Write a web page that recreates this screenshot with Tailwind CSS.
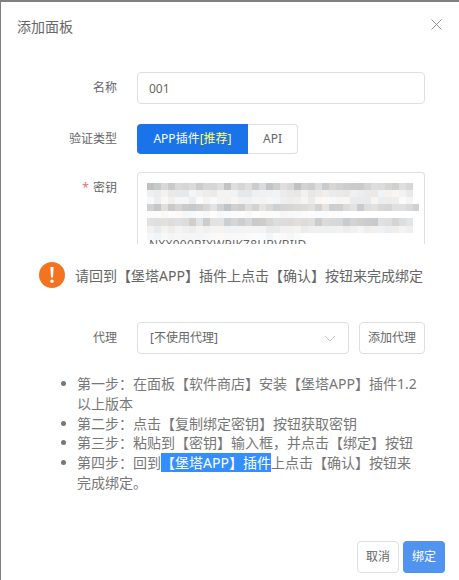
<!DOCTYPE html>
<html lang="en">
<head>
  <meta charset="UTF-8" />
  <title>添加面板</title>
  <script src="https://cdn.jsdelivr.net/npm/@tailwindcss/browser@4"></script>
</head>
<body class="bg-[#7f7f7f] h-[580px] overflow-hidden font-['Noto_Sans','Noto_Sans_CJK_SC',sans-serif]">
  <div class="ml-px mt-[2px] h-[578px] bg-white flex flex-col text-[12px] text-[#666]">
    <!-- Header -->
    <div class="h-[52px] pl-4 pr-4 flex justify-between items-start">
      <h1 class="text-[14px] leading-5 mt-[15px] text-[#666]">添加面板</h1>
      <svg class="w-[11px] h-[11px] mt-[17px] mr-[1px]" viewBox="0 0 11 11" fill="none" stroke="#909399" stroke-width="1"><path d="M0.5 0.5l10 10M10.5 0.5l-10 10" /></svg>
    </div>

    <!-- Form -->
    <div class="flex flex-col mt-[18px]">
      <div class="flex items-center h-8">
        <label class="w-[116px] text-right">名称</label>
        <input class="ml-[20px] w-[288px] h-8 border border-[#dcdfe6] rounded px-[11px] text-[12px] text-[#666]" value="001" />
      </div>

      <div class="flex items-center h-[30px] mt-[20px]">
        <label class="w-[116px] text-right">验证类型</label>
        <div class="ml-[20px] flex h-[30px]">
          <div class="w-[111px] bg-[#1a73e8] text-white rounded-l flex items-center justify-center">APP插件<span class="text-[#ffff66]">[推荐]</span></div>
          <div class="w-[50px] border border-l-0 border-[#dcdfe6] rounded-r flex items-center justify-center">API</div>
        </div>
      </div>

      <div class="flex items-start mt-[18px]">
        <label class="w-[116px] text-right leading-5 mt-[6px]"><span class="text-[#f56c6c] mr-1">*</span>密钥</label>
        <div class="relative ml-[20px] w-[288px] h-[72px] border border-b-0 border-[#dcdfe6] rounded-t overflow-hidden">
          <div class="absolute left-[11px] top-[64px] text-[12px] tracking-[0.2px] leading-[16px] text-[#666] whitespace-nowrap">NXX900RIXWPJKZ8HBVBIJD</div>
          <svg id="mosaic" class="absolute left-[9px] top-[10px] blur-[0.5px]" width="272" height="57"></svg>
        </div>
      </div>

      <!-- Notice -->
      <div class="flex items-center h-[26px] mt-[18px] ml-[38px]">
        <div class="w-[26px] h-[26px] rounded-full bg-[#f37321] text-white flex items-center justify-center">
          <svg class="w-[4px] h-[16px]" viewBox="0 0 4 16" fill="#fff"><path d="M0.4 0h3.2L3 10.5H1zM2 12.4a1.7 1.7 0 1 1 0 3.5a1.7 1.7 0 0 1 0-3.5z" /></svg>
        </div>
        <span class="ml-[10px] text-[14px] whitespace-nowrap">请回到【堡塔APP】插件上点击【确认】按钮来完成绑定</span>
      </div>

      <div class="flex items-center h-8 mt-[34px]">
        <label class="w-[116px] text-right">代理</label>
        <div class="ml-[20px] w-[212px] h-8 border border-[#dcdfe6] rounded px-3 flex items-center justify-between">
          <span>[不使用代理]</span>
          <svg class="w-[12px] h-[7px]" viewBox="0 0 12 7" fill="none" stroke="#c0c4cc" stroke-width="1"><path d="M1 1l5 5 5-5" /></svg>
        </div>
        <div class="ml-[10px] w-[66px] h-8 border border-[#dcdfe6] rounded flex items-center justify-center">添加代理</div>
      </div>
    </div>

    <!-- Steps -->
    <ul class="mt-[20px] ml-[76px] w-[346px] text-[14px] leading-[19.8px] text-[#777]">
      <li class="relative before:absolute before:-left-[16px] before:top-[7px] before:w-[5px] before:h-[5px] before:rounded-full before:bg-[#777]">第一步：在面板【软件商店】安装【堡塔APP】插件1.2以上版本</li>
      <li class="relative before:absolute before:-left-[16px] before:top-[7px] before:w-[5px] before:h-[5px] before:rounded-full before:bg-[#777]">第二步：点击【复制绑定密钥】按钮获取密钥</li>
      <li class="relative before:absolute before:-left-[16px] before:top-[7px] before:w-[5px] before:h-[5px] before:rounded-full before:bg-[#777]">第三步：粘贴到【密钥】输入框，并点击【绑定】按钮</li>
      <li class="relative before:absolute before:-left-[16px] before:top-[7px] before:w-[5px] before:h-[5px] before:rounded-full before:bg-[#777]">第四步：回到<span class="bg-[#338fff] text-white">【堡塔APP】插件</span>上点击【确认】按钮来完成绑定。</li>
    </ul>

    <!-- Footer -->
    <div class="mt-auto mb-[7px] mr-[14px] flex justify-end gap-[4px]">
      <button class="w-[42px] h-8 border border-[#dcdfe6] rounded text-[12px] text-[#666]">取消</button>
      <button class="w-[42px] h-8 rounded bg-[#5094f0] text-white text-[12px]">绑定</button>
    </div>
  </div>

  <script>
    // mosaic over the blurred key, values only need to look right
    const svg = document.getElementById("mosaic");
    const rows = [
      { y: 0, h: 7, end: 266, base: 208, spread: 34 },
      { y: 7, h: 7, end: 266, base: 238, spread: 14 },
      { y: 14, h: 7, end: 266, base: 242, spread: 16 },
      { y: 21, h: 7, end: 272, base: 212, spread: 32 },
      { y: 28, h: 7, end: 196, base: 250, spread: 6 },
      { y: 35, h: 8, end: 266, base: 215, spread: 26 },
      { y: 43, h: 7, end: 266, base: 240, spread: 12 },
      { y: 50, h: 7, end: 154, base: 248, spread: 8 },
    ];
    let seed = 7;
    const rand = () => (seed = (seed * 16807) % 2147483647) / 2147483647;
    let out = "";
    rows.forEach((r) => {
      for (let x = 0; x < r.end; x += 7) {
        const v = Math.round(r.base + (rand() - 0.5) * r.spread);
        const t = Math.round(rand() * 6 - 3);
        out += `<rect x="${x}" y="${r.y}" width="7" height="${r.h}" fill="rgb(${v + t},${v},${v - t})" />`;
      }
    });
    svg.innerHTML = out;
  </script>
</body>
</html>
